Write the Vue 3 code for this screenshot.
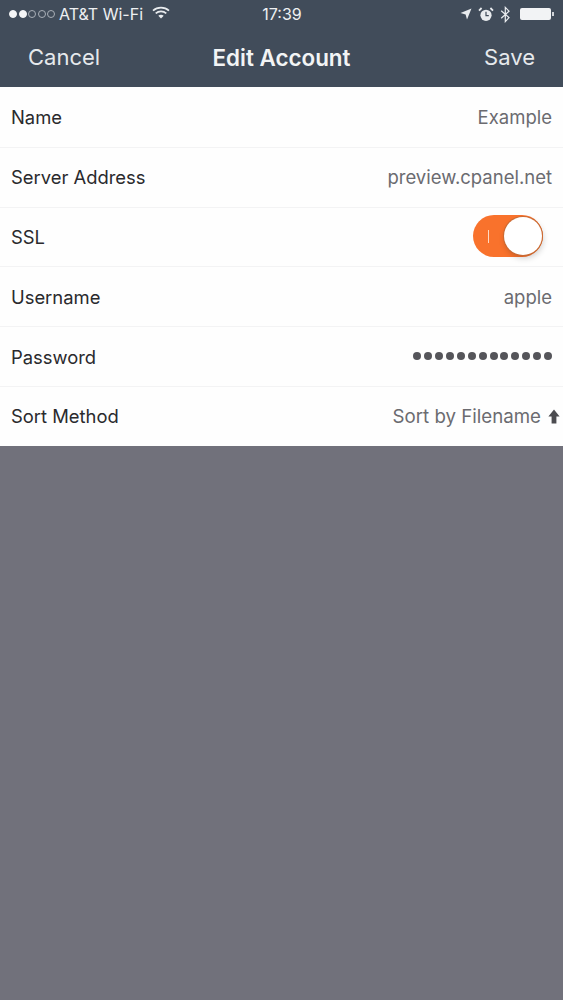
<script setup>
const rows = [
  { label: 'Name', value: 'Example' },
  { label: 'Server Address', value: 'preview.cpanel.net' },
  { label: 'SSL', toggle: true },
  { label: 'Username', value: 'apple' },
  { label: 'Password', dots: 13 },
  { label: 'Sort Method', value: 'Sort by Filename', arrow: true },
]
</script>

<template>
  <div class="screen">
    <header class="top">
      <div class="status">
        <div class="status-left">
          <span class="signal">
            <i v-for="n in 5" :key="n" :class="['sig', { on: n <= 2 }]"></i>
          </span>
          <span class="carrier">AT&amp;T Wi-Fi</span>
          <svg class="wifi" width="18" height="13" viewBox="0 0 18 13">
            <path d="M1 4.600C5.500.6 12.500.6 17 4.600" fill="none" stroke="#e9ecef" stroke-width="1.700" />
            <path d="M3.700 7.300c3-2.600 7.600-2.600 10.600 0" fill="none" stroke="#e9ecef" stroke-width="1.700" />
            <path d="M6.300 9.800c1.600-1.300 3.800-1.300 5.400 0L9 12.600z" fill="#e9ecef" />
          </svg>
        </div>
        <span class="time">17:39</span>
        <div class="status-right">
          <svg width="12" height="12" viewBox="0 0 12 12">
            <path d="M11.500.5 7 11.500 5.600 6.400.5 5z" fill="#e9ecef" />
          </svg>
          <svg width="16" height="15" viewBox="0 0 16 15">
            <circle cx="8" cy="8.300" r="5.600" fill="#e9ecef" />
            <path d="M8 4.800v3.800h2.800" fill="none" stroke="#414c5a" stroke-width="1.200" />
            <path d="M1 3.600 3.600 1M15 3.600 12.400 1" stroke="#e9ecef" stroke-width="1.800" fill="none" />
          </svg>
          <svg width="11" height="17" viewBox="0 0 11 17">
            <path d="M1.200 4.800 9 11.600 5.300 15.600V1.400L9 5.200 1.200 12.200" fill="none" stroke="#e9ecef" stroke-width="1.200" />
          </svg>
          <span class="battery"><i class="cap"></i></span>
        </div>
      </div>
      <nav class="nav">
        <span class="nav-btn">Cancel</span>
        <span class="title">Edit Account</span>
        <span class="nav-btn end">Save</span>
      </nav>
    </header>

    <section class="list">
      <div v-for="r in rows" :key="r.label" class="row">
        <span class="label">{{ r.label }}</span>
        <span v-if="r.toggle" class="toggle">
          <i class="tick"></i>
          <i class="knob"></i>
        </span>
        <span v-else-if="r.dots" class="dots">
          <i v-for="n in r.dots" :key="n" class="dot"></i>
        </span>
        <span v-else :class="['value', { 'has-arrow': r.arrow }]">
          {{ r.value }}
          <svg v-if="r.arrow" class="arrow" width="12" height="15" viewBox="0 0 12 15">
            <path d="M6 .5 11.600 7.600H8.400V14.500H3.600V7.600H.4z" fill="#4c4c50" />
          </svg>
        </span>
      </div>
    </section>

    <div class="rest"></div>
  </div>
</template>

<style scoped>
.screen {
  width: 563px;
  height: 1000px;
  display: flex;
  flex-direction: column;
  font-family: Inter, "Liberation Sans", Arial, sans-serif;
  background: #71717b;
}
.top {
  height: 87px;
  background: #414c5a;
  color: #eef0f2;
  box-sizing: border-box;
  flex: none;
}
.status {
  height: 29px;
  box-sizing: border-box;
  display: grid;
  grid-template-columns: 1fr auto 1fr;
  align-items: center;
  padding: 0 8px 1px 9px;
  font-size: 16px;
}
.status-left {
  display: flex;
  align-items: center;
}
.signal {
  display: flex;
  gap: 1.500px;
  margin-right: 4px;
}
.sig {
  width: 8px;
  height: 8px;
  box-sizing: border-box;
  border-radius: 50%;
  border: 1px solid #aab0b8;
}
.sig.on {
  background: #f4f5f6;
  border-color: #f4f5f6;
}
.wifi {
  margin-left: 9px;
  margin-top: -3px;
}
.status-right {
  display: flex;
  align-items: center;
  justify-content: flex-end;
  gap: 6px;
}
.battery {
  position: relative;
  width: 31px;
  height: 12px;
  margin-left: 3px;
  margin-right: 4px;
  background: #f2f3f5;
  border-radius: 2px;
}
.cap {
  position: absolute;
  right: -3px;
  top: 4px;
  width: 2px;
  height: 4px;
  background: #cfd3d8;
}
.nav {
  height: 56px;
  display: grid;
  grid-template-columns: 1fr auto 1fr;
  align-items: center;
  padding: 0 28px;
}
.nav-btn {
  font-size: 22px;
  color: #e6e9ec;
}
.nav-btn.end {
  justify-self: end;
}
.title {
  font-size: 22.400px;
  font-weight: 600;
  color: #f2f4f5;
}
.list {
  background: #fefefe;
  flex: none;
}
.row {
  height: 59.800px;
  display: flex;
  align-items: center;
  justify-content: space-between;
  padding: 0 11px;
  box-sizing: border-box;
  border-top: 1px solid #f3f3f4;
}
.row:first-child {
  border-top: none;
}
.label {
  font-size: 18.400px;
  color: #2a2a2d;
}
.value {
  font-size: 18.500px;
  color: #6b6b70;
  display: flex;
  align-items: center;
}
.value.has-arrow {
  font-size: 18.700px;
  margin-right: -8px;
}
.arrow {
  margin-left: 7px;
}
.toggle {
  position: relative;
  width: 70px;
  height: 42px;
  margin-right: 9px;
  margin-top: -1px;
  border-radius: 21px;
  background: #f9722c;
}
.tick {
  position: absolute;
  left: 15px;
  top: 15px;
  width: 1px;
  height: 13px;
  background: #ffd9c2;
}
.knob {
  position: absolute;
  right: 1px;
  top: 2px;
  width: 38px;
  height: 38px;
  border-radius: 50%;
  background: #fff;
  box-shadow: 0 0 0 1px #c96a33, 1px 3px 6px rgba(0, 0, 0, 0.2);
}
.dots {
  display: flex;
  gap: 2.900px;
  margin-top: -1px;
}
.dot {
  width: 8px;
  height: 8px;
  border-radius: 50%;
  background: #55555a;
}
.rest {
  flex: 1;
  background: #71717b;
}
</style>
